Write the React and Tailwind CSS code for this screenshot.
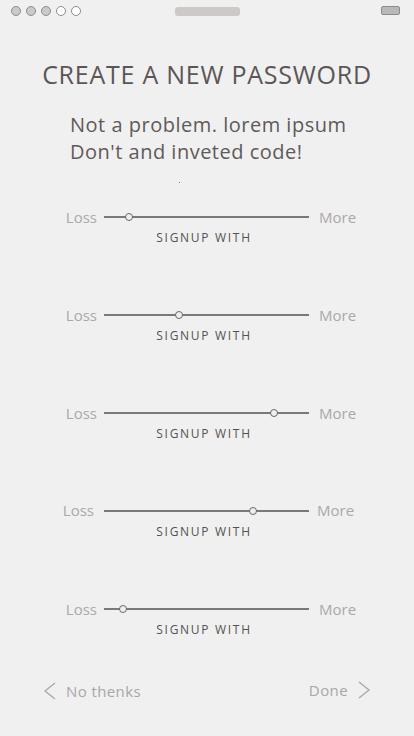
import React from 'react'

const SLIDERS = [
  { knob: 25 },
  { knob: 75 },
  { knob: 170 },
  { knob: 149, nudge: true },
  { knob: 19 },
]

const font = { fontFamily: '"Open Sans", "Noto Sans", sans-serif' }

function StatusBar() {
  return (
    <div className="relative h-[22px] flex items-center px-[11px]">
      <div className="flex gap-[5px]">
        {[0, 1, 2].map(i => (
          <span key={i} className="w-[10px] h-[10px] rounded-full border border-[#8c8c8c] bg-[#cdc9c9]" />
        ))}
        {[3, 4].map(i => (
          <span key={i} className="w-[10px] h-[10px] rounded-full border border-[#8c8c8c] bg-white" />
        ))}
      </div>
      <div className="absolute left-[175px] top-[7px] w-[65px] h-[9px] rounded-[3px] bg-[#cdc9c9]" />
      <div className="absolute right-[14px] top-[6px] flex items-center">
        <span className="w-[19px] h-[9px] rounded-[2px] border border-[#8c8c8c] bg-[#b9b9b9]" />
      </div>
    </div>
  )
}

function Slider({ knob, nudge }) {
  return (
    <div className="w-[414px]">
      <div className="flex items-center h-[20px] pl-[57px]">
        <span className={`w-[40px] text-right text-[15px] text-[#aca8a8] ${nudge ? '-translate-x-[3px] -translate-y-[1px]' : ''}`}>Loss</span>
        <div className="relative ml-[7px] w-[205px] h-[2px] bg-[#7b7878]">
          <span
            className="absolute top-1/2 w-[8px] h-[8px] -ml-[4px] -mt-[4px] rounded-full border-[1.5px] border-[#6a6666] bg-[#efefef]"
            style={{ left: knob }}
          />
        </div>
        <span className={`ml-[10px] w-[45px] text-[15px] text-[#aca8a8] ${nudge ? '-translate-x-[2px] -translate-y-[1px]' : ''}`}>More</span>
      </div>
      <div className="mt-[2px] w-[408px] text-center text-[12px] tracking-[1.7px] text-[#555151]">SIGNUP WITH</div>
    </div>
  )
}

export default function App() {
  return (
    <div className="w-[414px] h-[736px] bg-[#f0f0f0] overflow-hidden" style={font}>
      <StatusBar />

      <h1 className="mt-[37px] text-center text-[25px] leading-[30px] tracking-[0.75px] text-[#5b5656]">
        CREATE A NEW PASSWORD
      </h1>

      <p className="mt-[22px] pl-[70px] text-[20px] leading-[27px] tracking-[0.5px] text-[#5f5a5a]">
        Not a problem. lorem ipsum
        <br />
        Don't and inveted code!
      </p>

      <div className="h-[18px] relative">
        <span className="absolute left-[179px] top-[17px] w-[1px] h-[1px] bg-[#777]" />
      </div>

      <div className="mt-[24px] flex flex-col gap-[58px]">
        {SLIDERS.map((s, i) => (
          <Slider key={i} {...s} />
        ))}
      </div>

      <div className="mt-[39px] flex items-center justify-between px-[43px]">
        <div className="flex items-center gap-[9px] mt-[2px]">
          <svg width="14" height="18" viewBox="0 0 14 18" fill="none" stroke="#aaa6a6" strokeWidth="1.3">
            <path d="M12 1 L2 9 L12 17" />
          </svg>
          <span className="text-[15px] tracking-[0.4px] text-[#aaa6a6]">No thenks</span>
        </div>
        <div className="flex items-center gap-[9px]">
          <span className="text-[15px] tracking-[0.4px] text-[#aaa6a6]">Done</span>
          <svg width="14" height="18" viewBox="0 0 14 18" fill="none" stroke="#aaa6a6" strokeWidth="1.3">
            <path d="M2 1 L12 9 L2 17" />
          </svg>
        </div>
      </div>
    </div>
  )
}
